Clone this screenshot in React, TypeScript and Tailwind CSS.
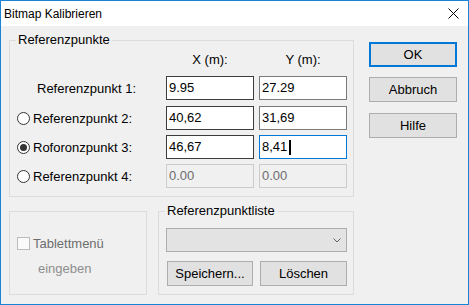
import React from 'react';

const btn =
  'flex items-center justify-center bg-[#e1e1e1] border border-[#adadad] text-black';

function Radio({ checked }: { checked?: boolean }) {
  return (
    <span className="flex items-center justify-center w-[13px] h-[13px] rounded-full border border-[#333333] bg-white shrink-0">
      {checked ? <span className="w-[7px] h-[7px] rounded-full bg-[#333333]" /> : null}
    </span>
  );
}

interface Row {
  label: string;
  radio: boolean;
  checked?: boolean;
  x: string;
  y: string;
  disabled?: boolean;
  focused?: boolean;
  gap: string;
}

const rows: Row[] = [
  { label: 'Referenzpunkt 1:', radio: false, x: '9.95', y: '27.29', gap: 'mt-0' },
  { label: 'Referenzpunkt 2:', radio: true, x: '40,62', y: '31,69', gap: 'mt-[6px]' },
  { label: 'Roforonzpunkt 3:', radio: true, checked: true, x: '46,67', y: '8,41', focused: true, gap: 'mt-[5px]' },
  { label: 'Referenzpunkt 4:', radio: true, x: '0.00', y: '0.00', disabled: true, gap: 'mt-[5px]' },
];

export default function App() {
  return (
    <div className="w-[469px] h-[305px] flex flex-col border border-[#1883d7] bg-[#f0f0f0] text-[13px] text-black font-['Liberation_Sans',Arial,sans-serif]">
      {/* title bar */}
      <div className="h-[25px] shrink-0 flex items-center justify-between bg-white pl-[3px] pr-[9px]">
        <span className="text-[12px] leading-[14px]">Bitmap Kalibrieren</span>
        <svg width="11" height="11" viewBox="0 0 11 11">
          <path d="M0.5 0.5 L10.5 10.5 M10.5 0.5 L0.5 10.5" stroke="#000" strokeWidth="1" />
        </svg>
      </div>

      <div className="flex-1 flex pl-[8px]">
        {/* left column */}
        <div className="w-[345px] flex flex-col pt-[7px]">
          <fieldset className="h-[164px] border border-[#dcdcdc]">
            <legend className="ml-[6px] px-[2px] leading-[14px]">Referenzpunkte</legend>
            <div className="flex flex-col">
              <div className="flex h-[15px] mt-[5px] leading-[15px]">
                <span className="w-[156px]" />
                <span className="w-[88px] text-center">X (m):</span>
                <span className="w-[88px] ml-[5px] text-center">Y (m):</span>
              </div>
              <div className="flex flex-col mt-[9px]">
                {rows.map((r) => (
                  <div key={r.label} className={`flex items-center h-[24px] ${r.gap}`}>
                    <div className="w-[156px] flex items-center">
                      {r.radio ? (
                        <div className="flex items-center pl-[7px]">
                          <Radio checked={r.checked} />
                          <span className="ml-[3px] leading-[15px]">{r.label}</span>
                        </div>
                      ) : (
                        <span className="pl-[27px] leading-[15px]">{r.label}</span>
                      )}
                    </div>
                    <div
                      className={`w-[88px] h-[24px] flex items-center pl-[2px] border ${
                        r.disabled ? 'border-[#cccccc] text-[#6d6d6d] bg-[#f0f0f0]' : 'border-[#3c3c3c] bg-white'
                      }`}
                    >
                      {r.x}
                    </div>
                    <div
                      className={`w-[88px] h-[24px] ml-[5px] flex items-center pl-[2px] border ${
                        r.disabled
                          ? 'border-[#cccccc] text-[#6d6d6d] bg-[#f0f0f0]'
                          : r.focused
                          ? 'border-[#0078d7] bg-white'
                          : 'border-[#7a7a7a] bg-white'
                      }`}
                    >
                      {r.y}
                      {r.focused ? <span className="ml-[2px] w-[2px] h-[15px] bg-black" /> : null}
                    </div>
                  </div>
                ))}
              </div>
            </div>
          </fieldset>

          <div className="flex items-end mt-[7px]">
            <div className="w-[138px] h-[84px] border border-[#dcdcdc] flex flex-col pt-[25px] text-[#6d6d6d]">
              <div className="flex items-center h-[13px] pl-[7px]">
                <span className="w-[13px] h-[13px] border border-[#bcbcbc] bg-[#fafafa]" />
                <span className="ml-[3px] leading-[13px]">Tablettmenü</span>
              </div>
              <span className="pl-[28px] mt-[11px] leading-[15px] text-[#8d8d8d]">eingeben</span>
            </div>

            <fieldset className="w-[196px] h-[91px] ml-[11px] border border-[#dcdcdc]">
              <legend className="ml-[6px] px-[2px] leading-[14px]">Referenzpunktliste</legend>
              <div className="flex flex-col pl-[7px]">
                <div className="mt-[10px] w-[181px] h-[24px] flex items-center justify-end pr-[5px] bg-[#e3e3e3] border border-[#adadad]">
                  <svg width="8" height="5" viewBox="0 0 8 5">
                    <path d="M0.5 0.5 L4 4 L7.5 0.5" stroke="#606060" strokeWidth="1" fill="none" />
                  </svg>
                </div>
                <div className="flex mt-[9px]">
                  <button className={`${btn} ml-[1px] w-[86px] h-[25px]`}>Speichern...</button>
                  <button className={`${btn} ml-[7px] w-[87px] h-[25px]`}>Löschen</button>
                </div>
              </div>
            </fieldset>
          </div>
        </div>

        {/* right column */}
        <div className="flex flex-col ml-[15px] pt-[16px]">
          <button className="flex items-center justify-center w-[88px] h-[25px] bg-[#e1e1e1] border-2 border-[#0078d7]">
            OK
          </button>
          <button className={`${btn} w-[88px] h-[25px] mt-[10px]`}>Abbruch</button>
          <button className={`${btn} w-[88px] h-[25px] mt-[11px]`}>Hilfe</button>
        </div>
      </div>
    </div>
  );
}
